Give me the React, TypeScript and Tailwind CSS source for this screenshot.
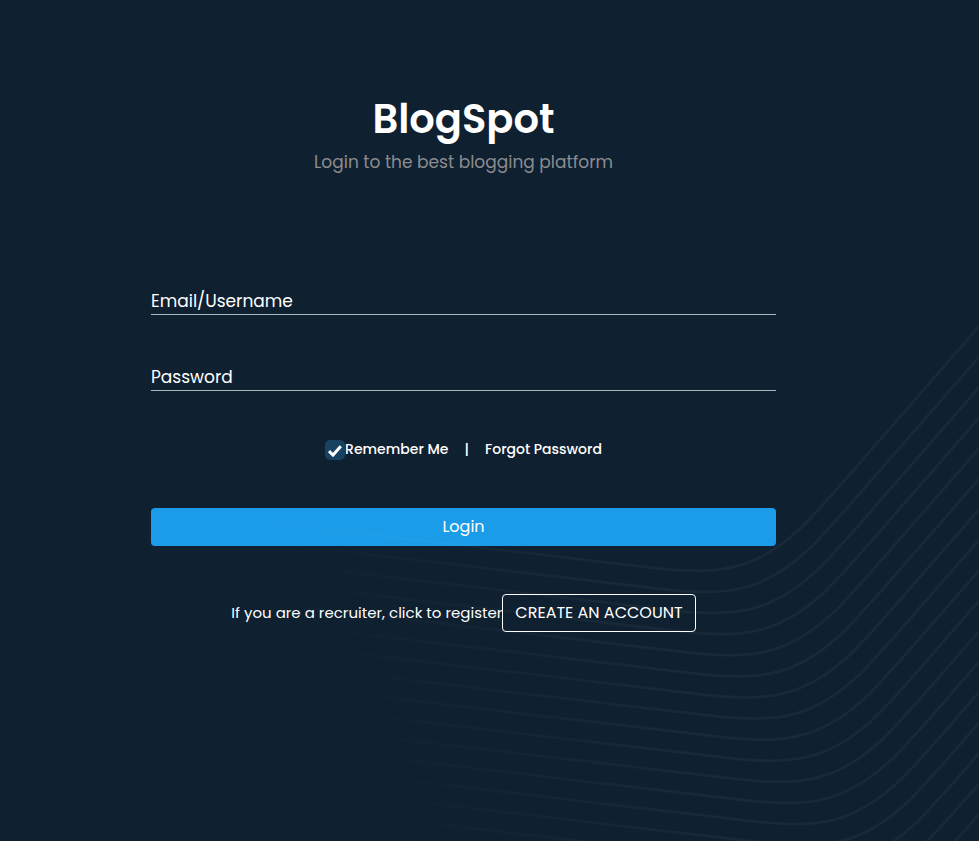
const LINES = Array.from({ length: 34 }, (_, i) => i);

function Waves() {
  return (
    <svg
      aria-hidden="true"
      className="pointer-events-none absolute inset-0 h-full w-full"
      viewBox="0 0 979 841"
      preserveAspectRatio="xMaxYMax slice"
      fill="none"
    >
      <defs>
        <linearGradient id="fade" gradientUnits="userSpaceOnUse" x1="250" y1="0" x2="620" y2="0">
          <stop offset="0" stopColor="#fff" stopOpacity="0" />
          <stop offset="1" stopColor="#fff" stopOpacity="0.04" />
        </linearGradient>
      </defs>
      {LINES.map((i) => (
        <path
          key={i}
          d="M230 518L650 567.5C690 572.5 725 573 752 561C790 545 811 519 865 457L1100 188"
          transform={`translate(${i * 8.2} ${i * 21.1})`}
          stroke="url(#fade)"
          strokeWidth="2.6"
        />
      ))}
    </svg>
  );
}

function Field({ label, type }: { label: string; type: string }) {
  return (
    <input
      type={type}
      aria-label={label}
      placeholder={label}
      className="block h-7 w-full border-b border-[#adb5bd] bg-transparent text-[17px] text-white outline-none placeholder:text-white placeholder:opacity-100"
    />
  );
}

export default function App() {
  return (
    <main className="relative min-h-screen overflow-hidden bg-[#0f2030] pt-[92px] pr-[203px] pb-16 pl-[151px] font-['Poppins','Inter',sans-serif] text-white">
      <header className="text-center">
        <h1 className="text-[40px] leading-[54px] font-semibold">BlogSpot</h1>
        <p className="mt-0.5 text-[17px] leading-7 text-[#8b8c8f]">Login to the best blogging platform</p>
      </header>

      <form className="mt-[111px]" onSubmit={(e) => e.preventDefault()}>
        <div className="flex flex-col gap-12">
          <Field label="Email/Username" type="text" />
          <Field label="Password" type="password" />
        </div>

        <div className="mt-12 flex h-5 items-center justify-center gap-4 text-sm font-medium whitespace-nowrap">
          <label className="flex items-center">
            <span className="relative mt-0.5 block size-5">
              <input
                type="checkbox"
                defaultChecked
                className="peer block size-5 appearance-none rounded-[5px] bg-[#174262]"
              />
              <svg
                aria-hidden="true"
                viewBox="0 0 20 20"
                className="pointer-events-none absolute inset-0 hidden size-5 peer-checked:block"
                fill="none"
                stroke="#fff"
                strokeWidth="3"
              >
                <path d="M4 11.2L8 15L15.8 6.2" />
              </svg>
            </span>
            Remember Me
          </label>
          <span>|</span>
          <a href="#forgot">Forgot Password</a>
        </div>

        <button type="submit" className="mt-[49px] block h-[38px] w-full rounded bg-[#1b9ce8] text-base">
          Login
        </button>
      </form>

      <div className="mt-12 flex items-center justify-center text-[15px] whitespace-nowrap">
        <span>If you are a recruiter, click to register</span>
        <button type="button" className="h-[38px] rounded border border-white px-3 text-base">
          CREATE AN ACCOUNT
        </button>
      </div>

      <Waves />
    </main>
  );
}
